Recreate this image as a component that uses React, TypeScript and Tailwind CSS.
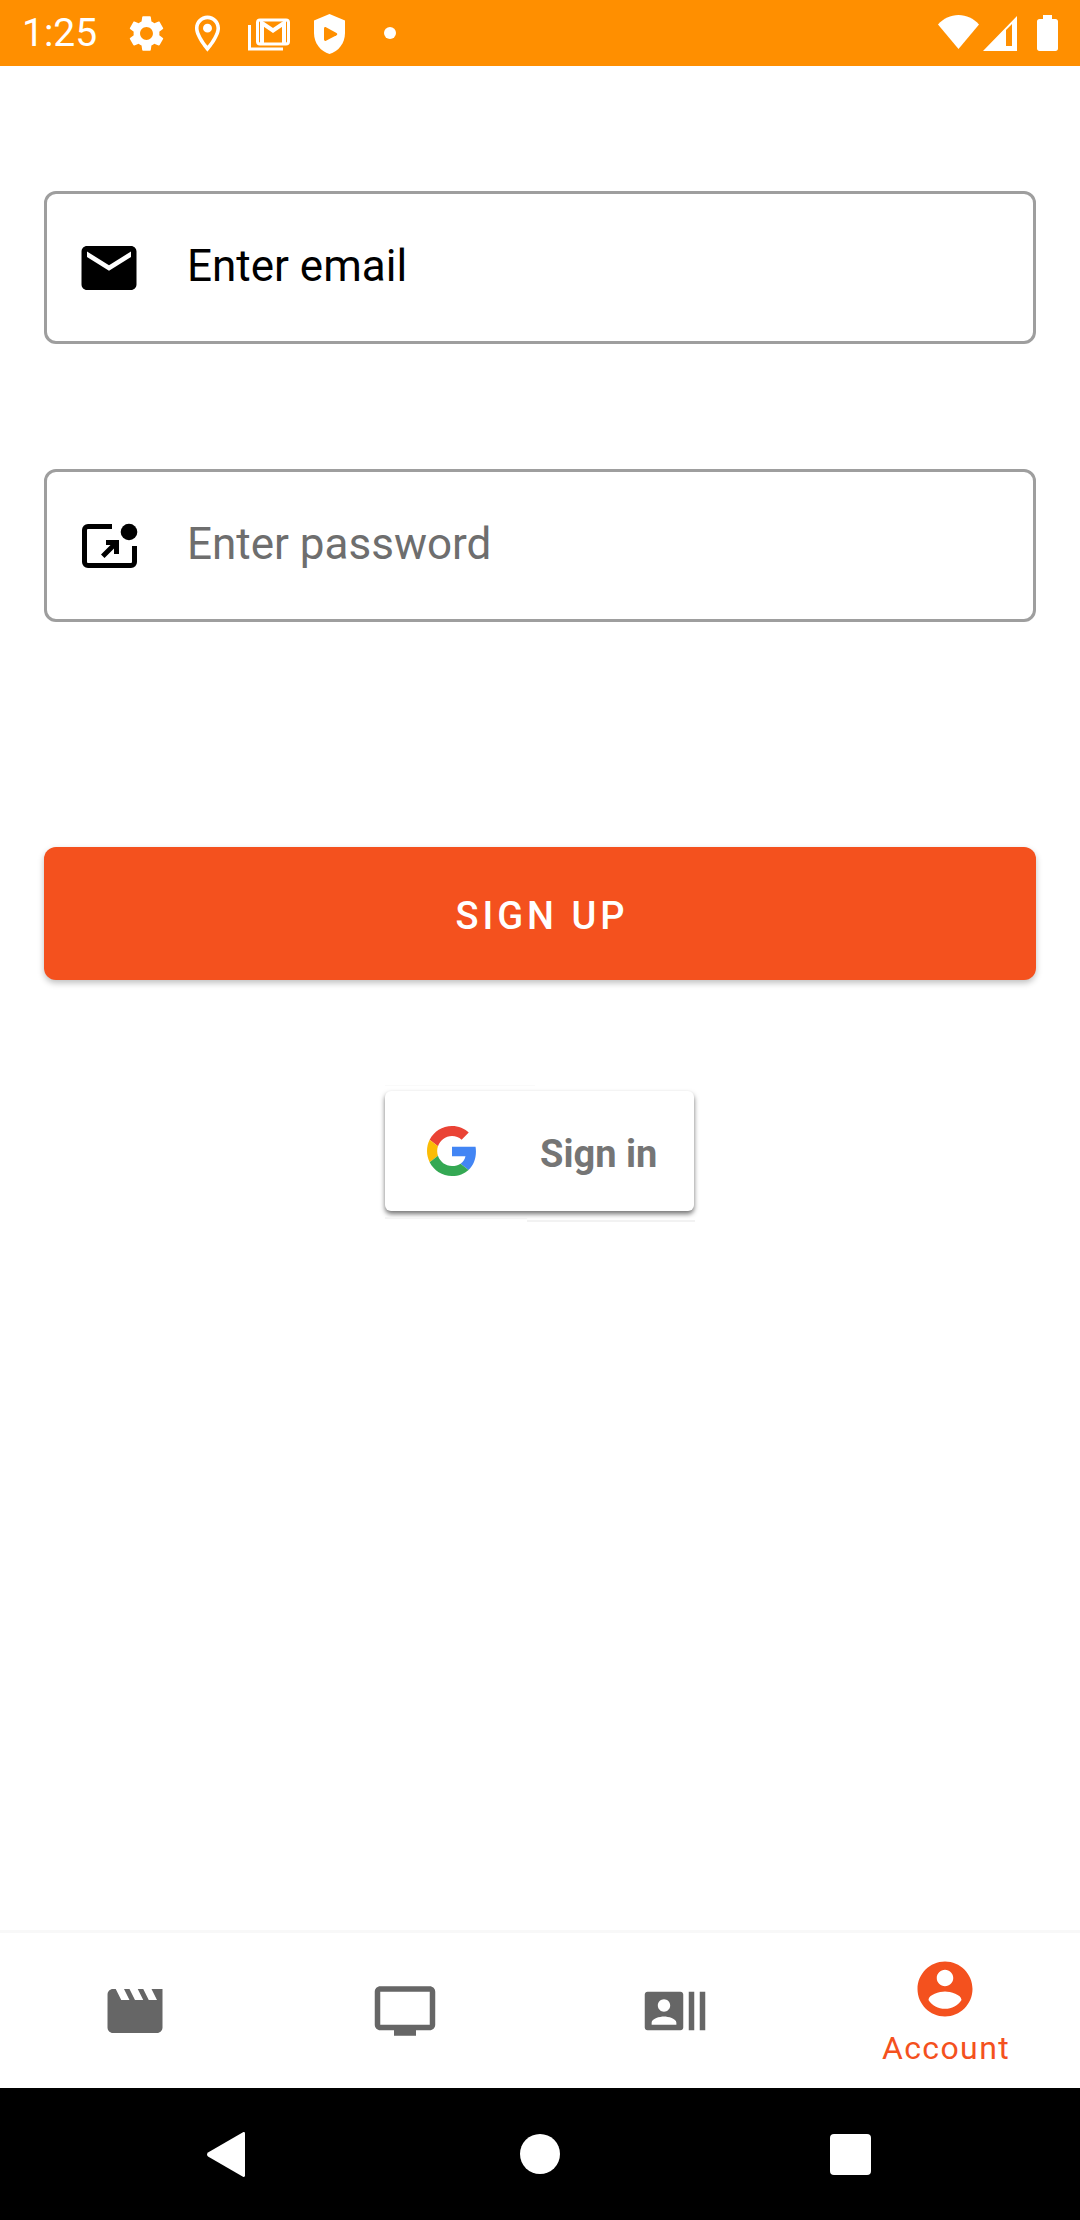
import React from "react";

const Mi = ({ d, className }: { d: string; className: string }) => (
  <svg viewBox="0 0 24 24" className={className} fill="currentColor" aria-hidden="true">
    <path d={d} />
  </svg>
);

const GEAR =
  "M19.14 12.94c.04-.3.06-.61.06-.94 0-.32-.02-.64-.07-.94l2.03-1.58c.18-.14.23-.41.12-.61l-1.92-3.32c-.12-.22-.37-.29-.59-.22l-2.39.96c-.5-.38-1.03-.7-1.62-.94l-.36-2.54c-.04-.24-.24-.41-.48-.41h-3.84c-.24 0-.43.17-.47.41l-.36 2.54c-.59.24-1.13.57-1.62.94l-2.39-.96c-.22-.08-.47 0-.59.22L2.74 8.87c-.12.21-.08.47.12.61l2.03 1.58c-.05.3-.09.63-.09.94s.02.64.07.94l-2.03 1.58c-.18.14-.23.41-.12.61l1.92 3.32c.12.22.37.29.59.22l2.39-.96c.5.38 1.03.7 1.62.94l.36 2.54c.05.24.24.41.48.41h3.84c.24 0 .44-.17.47-.41l.36-2.54c.59-.24 1.13-.56 1.62-.94l2.39.96c.22.08.47 0 .59-.22l1.92-3.32c.12-.22.07-.47-.12-.61l-2.01-1.58zM12 15.6c-1.98 0-3.6-1.62-3.6-3.6s1.62-3.6 3.6-3.6 3.6 1.62 3.6 3.6-1.62 3.6-3.6 3.6z";
const PIN =
  "M12 2C8.13 2 5 5.13 5 9c0 5.25 7 13 7 13s7-7.75 7-13c0-3.87-3.13-7-7-7zM7 9c0-2.76 2.24-5 5-5s5 2.24 5 5c0 2.88-2.88 7.19-5 9.88C9.92 16.21 7 11.85 7 9zM12 6.5a2.5 2.5 0 1 0 0 5 2.5 2.5 0 0 0 0-5z";
const EMAIL =
  "M20 4H4c-1.1 0-1.99.9-1.99 2L2 18c0 1.1.9 2 2 2h16c1.1 0 2-.9 2-2V6c0-1.1-.9-2-2-2zm0 4l-8 5-8-5V6l8 5 8-5v2z";
const MOVIE =
  "M18 4l2 4h-3l-2-4h-2l2 4h-3l-2-4H8l2 4H7L5 4H4c-1.1 0-1.99.9-1.99 2L2 18c0 1.1.9 2 2 2h16c1.1 0 2-.9 2-2V4h-4z";
const TV =
  "M21 3H3c-1.1 0-2 .9-2 2v12c0 1.1.9 2 2 2h5v2h8v-2h5c1.1 0 1.99-.9 1.99-2L23 5c0-1.1-.9-2-2-2zm0 14H3V5h18v12z";
const ACTORS =
  "M21 5v14h2V5h-2zm-4 14h2V5h-2v14zM14 5H2c-.55 0-1 .45-1 1v12c0 .55.45 1 1 1h12c.55 0 1-.45 1-1V6c0-.55-.45-1-1-1zM8 7.75c1.24 0 2.25 1.01 2.25 2.25S9.24 12.25 8 12.25 5.75 11.24 5.75 10 6.76 7.75 8 7.75zM12.5 17h-9v-.75c0-1.5 3-2.25 4.5-2.25s4.5.75 4.5 2.25V17z";
const ACCOUNT =
  "M12 2C6.48 2 2 6.48 2 12s4.48 10 10 10 10-4.48 10-10S17.52 2 12 2zm0 3c1.66 0 3 1.34 3 3s-1.34 3-3 3-3-1.34-3-3 1.34-3 3-3zm0 14.2c-2.5 0-4.71-1.28-6-3.22.03-1.99 4-3.08 6-3.08 1.99 0 5.97 1.09 6 3.08-1.29 1.94-3.5 3.22-6 3.22z";

const GmailStack = () => (
  <svg viewBox="0 0 42 36" className="w-[42px] h-[36px]" aria-hidden="true">
    <path d="M1.500 7V31H35" fill="none" stroke="#fff" strokeWidth="3" />
    <rect x="9.500" y="2" width="31" height="24" rx="2.500" fill="none" stroke="#fff" strokeWidth="3" />
    <path d="M14 25V5L25 12.500L36 5V25" fill="none" stroke="#fff" strokeWidth="4" />
  </svg>
);

const ShieldPlay = () => (
  <svg viewBox="0 0 31 40" className="w-[31px] h-[40px]" aria-hidden="true">
    <path fill="#fff" d="M15.500 0L31 6.500V19C31 29 24.500 37.500 15.500 40C6.500 37.500 0 29 0 19V6.500Z" />
    <path fill="#FF8F00" d="M10 14.500c0-1.200 1-1.800 2-1.300l10.500 5.700c1 .6 1 1.800 0 2.400L12 26.700c-1 .5-2-.1-2-1.300z" />
  </svg>
);

const Wifi = () => (
  <svg viewBox="0 0 41 34" className="w-[41px] h-[34px]" aria-hidden="true">
    <path fill="#fff" d="M20.500 34L0 9.500C5.500 3.500 12.500 0 20.500 0S35.500 3.500 41 9.500Z" />
  </svg>
);

const Signal = () => (
  <svg viewBox="0 0 34 35" className="w-[34px] h-[35px]" aria-hidden="true">
    <path fill="#fff" fillRule="evenodd" d="M0 35L34 0V35ZM23 14V30H29V8Z" />
  </svg>
);

const Battery = () => (
  <svg viewBox="0 0 21 36" className="w-[21px] h-[36px]" aria-hidden="true">
    <path fill="#fff" d="M6 0H15V4H18.500C20 4 21 5 21 6.500V33.500C21 35 20 36 18.500 36H2.500C1 36 0 35 0 33.500V6.500C0 5 1 4 2.500 4H6Z" />
  </svg>
);

const PasswordIcon = () => (
  <svg viewBox="0 -5 66 66" className="w-[66px] h-[66px] shrink-0" aria-hidden="true">
    <path
      d="M36 8.500H12C10 8.500 8.500 10 8.500 12V44C8.500 46 10 47.500 12 47.500H55C57 47.500 58.500 46 58.500 44V28"
      fill="none"
      stroke="#000"
      strokeWidth="5"
    />
    <circle cx="53" cy="14" r="8.300" fill="#000" />
    <path d="M30 22H43V36H38V30.500L28.500 40L25 36.500L34.500 27H30Z" fill="#000" />
  </svg>
);

const GoogleG = () => (
  <svg viewBox="0 0 48 48" className="w-[50px] h-[50px]" aria-hidden="true">
    <path fill="#EA4335" d="M24 9.500c3.540 0 6.710 1.220 9.210 3.600l6.850-6.850C35.900 2.380 30.470 0 24 0 14.620 0 6.510 5.380 2.560 13.220l7.980 6.190C12.430 13.720 17.740 9.500 24 9.500z" />
    <path fill="#4285F4" d="M46.980 24.550c0-1.570-.15-3.090-.38-4.550H24v9.020h12.940c-.58 2.960-2.260 5.480-4.780 7.180l7.730 6c4.510-4.180 7.090-10.360 7.090-17.650z" />
    <path fill="#FBBC05" d="M10.530 28.590c-.48-1.450-.76-2.990-.76-4.590s.27-3.140.76-4.590l-7.980-6.190C.92 16.460 0 20.120 0 24c0 3.880.92 7.540 2.560 10.780l7.970-6.190z" />
    <path fill="#34A853" d="M24 48c6.480 0 11.930-2.130 15.890-5.810l-7.730-6c-2.150 1.450-4.920 2.300-8.160 2.300-6.260 0-11.570-4.220-13.470-9.910l-7.980 6.190C6.510 42.620 14.620 48 24 48z" />
  </svg>
);

const Field = ({
  icon,
  text,
  textClass,
  className,
}: {
  icon: React.ReactNode;
  text: string;
  textClass: string;
  className: string;
}) => (
  <div className={`h-[153px] rounded-[12px] border-[3px] border-[#9e9e9e] flex items-center pl-[29px] ${className}`}>
    {icon}
    <span className={`ml-[45px] mb-[3px] text-[44px] leading-none ${textClass}`}>{text}</span>
  </div>
);

const NavTab = ({ d, label }: { d: string; label?: string }) => (
  <div className={`w-[270px] flex flex-col items-center ${label ? "pt-[23px] text-[#f4511e]" : "pt-[45px] text-[#666666]"}`}>
    <Mi d={d} className="w-[66px] h-[66px]" />
    {label && <span className="mt-[6px] ml-[2px] text-[32px] leading-[40px] tracking-[1.4px]">{label}</span>}
  </div>
);

export default function App() {
  return (
    <div className="w-[1080px] h-[2220px] bg-white flex flex-col font-['Roboto',sans-serif] overflow-hidden">
      {/* status bar */}
      <div className="h-[66px] shrink-0 bg-[#FF8F00] flex items-center text-white">
        <span className="ml-[22px] w-[74px] text-[39px] leading-none font-normal whitespace-nowrap">1:25</span>
        <div className="ml-[29px] w-[43px] flex justify-center">
          <Mi d={GEAR} className="w-[43px] h-[43px] shrink-0" />
        </div>
        <div className="ml-[18px]">
          <Mi d={PIN} className="w-[43px] h-[43px]" />
        </div>
        <div className="ml-[19px] mt-[5px]">
          <GmailStack />
        </div>
        <div className="ml-[24px] mt-[2px]">
          <ShieldPlay />
        </div>
        <div className="ml-[39px] w-[12px] h-[12px] rounded-full bg-white" />
        <div className="ml-auto flex items-center">
          <div className="mb-[2px]">
            <Wifi />
          </div>
          <div className="ml-[4px]">
            <Signal />
          </div>
          <div className="ml-[20px] mr-[22px]">
            <Battery />
          </div>
        </div>
      </div>

      {/* content */}
      <div className="flex-1 flex flex-col px-[44px] pt-[125px]">
        <Field
          icon={<Mi d={EMAIL} className="w-[66px] h-[66px] shrink-0 text-black" />}
          text="Enter email"
          textClass="text-black"
          className=""
        />
        <Field
          icon={<PasswordIcon />}
          text="Enter password"
          textClass="text-[#6e6e6e]"
          className="mt-[125px]"
        />
        <div className="mt-[225px] h-[133px] rounded-[12px] bg-[#f4511e] shadow-[0_3px_6px_rgba(0,0,0,0.25)] flex items-center justify-center">
          <span className="pt-[6px] ml-[4px] text-white text-[38px] font-medium tracking-[4px]">SIGN UP</span>
        </div>
        <div className="relative mt-[111px] self-center ml-[-1px] w-[309px] h-[120px] rounded-[6px] bg-white shadow-[0_3px_5px_rgba(0,0,0,0.55)] flex items-center">
          <div className="ml-[42px]">
            <GoogleG />
          </div>
          <span className="ml-[63px] mt-[6px] text-[38px] font-bold text-[#757575] leading-none">Sign in</span>
          <div className="absolute left-0 top-[-6px] w-[150px] h-[1px] bg-[#fafafa]" />
          <div className="absolute left-[142px] bottom-[-11px] w-[168px] h-[2px] bg-[#f2f2f2]" />
          <div className="absolute left-0 bottom-[-8px] w-[142px] h-[2px] bg-[#f4f4f4]" />
        </div>
      </div>

      {/* bottom navigation */}
      <div className="h-[158px] shrink-0 border-t-[3px] border-[#f8f8f8] bg-white flex">
        <NavTab d={MOVIE} />
        <NavTab d={TV} />
        <NavTab d={ACTORS} />
        <NavTab d={ACCOUNT} label="Account" />
      </div>

      {/* system navigation */}
      <div className="h-[132px] shrink-0 bg-black flex items-center">
        <svg viewBox="0 0 38 45" className="ml-[207px] w-[38px] h-[45px]" aria-hidden="true">
          <path fill="#fff" d="M36 0.300C37.200-.3 38 .5 38 1.500V43.500C38 44.500 37.200 45.300 36 44.700L1 24.500C-.3 23.500-.3 21.500 1 20.500Z" />
        </svg>
        <div className="ml-[275px] w-[40px] h-[40px] rounded-full bg-white" />
        <div className="ml-[270px] w-[41px] h-[41px] rounded-[4px] bg-white" />
      </div>
    </div>
  );
}
